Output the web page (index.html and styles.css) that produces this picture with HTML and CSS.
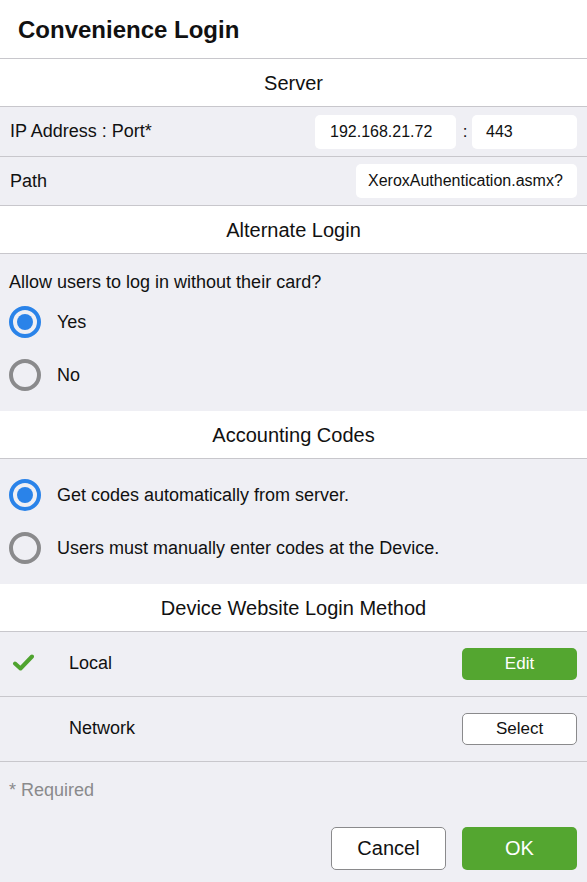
FILE: index.html
```html
<!DOCTYPE html>
<html>
<head>
<meta charset="utf-8">
<link rel="stylesheet" href="styles.css">
</head>
<body>
<div class="page">
  <header class="titlebar">Convenience Login</header>

  <div class="section-head">Server</div>
  <div class="row field-row">
    <span class="label">IP Address : Port*</span>
    <div class="inputs">
      <div class="input ip">192.168.21.72</div>
      <span class="colon">:</span>
      <div class="input port">443</div>
    </div>
  </div>
  <div class="row field-row">
    <span class="label">Path</span>
    <div class="input path">XeroxAuthentication.asmx?</div>
  </div>

  <div class="section-head">Alternate Login</div>
  <div class="group">
    <div class="question">Allow users to log in without their card?</div>
    <div class="radio-row"><span class="radio on"></span><span>Yes</span></div>
    <div class="radio-row"><span class="radio"></span><span>No</span></div>
  </div>

  <div class="section-head noline">Accounting Codes</div>
  <div class="group codes">
    <div class="radio-row"><span class="radio on"></span><span>Get codes automatically from server.</span></div>
    <div class="radio-row"><span class="radio"></span><span>Users must manually enter codes at the Device.</span></div>
  </div>

  <div class="section-head noline">Device Website Login Method</div>
  <div class="row method-row">
    <span class="check">
      <svg width="22" height="18" viewBox="0 0 22 18"><path d="M3 9.5 L8.5 14.5 L20 2.5" fill="none" stroke="#4fa32f" stroke-width="4" stroke-linecap="round" stroke-linejoin="round"/></svg>
    </span>
    <span class="method-label">Local</span>
    <button class="btn green small">Edit</button>
  </div>
  <div class="row method-row">
    <span class="check"></span>
    <span class="method-label">Network</span>
    <button class="btn outline small">Select</button>
  </div>

  <div class="required">* Required</div>

  <div class="footer">
    <button class="btn outline big">Cancel</button>
    <button class="btn green big">OK</button>
  </div>
</div>
</body>
</html>
```

FILE: styles.css
```css
* { box-sizing: border-box; }
html, body { margin: 0; padding: 0; }
body {
  font-family: "Liberation Sans", Arial, sans-serif;
  color: #111;
  background: #efeff4;
}
.page { width: 587px; height: 882px; background: #efeff4; display: flex; flex-direction: column; }
.titlebar {
  background: #fff;
  height: 59px;
  border-bottom: 1px solid #c8c7cc;
  font-weight: bold;
  font-size: 24px;
  padding-left: 18px;
  display: flex;
  align-items: center;
  padding-top: 1px;
}
.section-head {
  background: #fff;
  height: 48px;
  border-bottom: 1px solid #c8c7cc;
  display: flex;
  align-items: center;
  justify-content: center;
  font-size: 20px;
  padding-top: 1px;
}
.row {
  display: flex;
  align-items: center;
  border-bottom: 1px solid #c8c7cc;
}
.field-row {
  height: 50px;
  padding: 0 10px 0 10px;
  justify-content: space-between;
  font-size: 18px;
}
.field-row + .field-row { height: 49px; }
.inputs { display: flex; align-items: center; }
.input {
  background: #fff;
  border-radius: 5px;
  height: 34px;
  display: flex;
  align-items: center;
  font-size: 16px;
  padding-left: 14px;
}
.ip { width: 141px; padding-left: 15px; }
.port { width: 105px; padding-left: 14px; }
.colon { width: 16px; text-align: center; font-size: 17px; padding-left: 2px; }
.path { width: 221px; padding-left: 12px; }
.group { padding: 18px 9px 10px; font-size: 18px; height: 157px; }
.question { margin-bottom: 10px; }
.radio-row { display: flex; align-items: center; height: 54px; }
.radio {
  width: 32px; height: 32px;
  border-radius: 50%;
  border: 4px solid #8a8a8c;
  margin-right: 16px;
  position: relative;
  flex: none;
}
.radio.on { border-color: #2a83e9; }
.radio.on::after {
  content: "";
  position: absolute;
  left: 4px; top: 4px;
  width: 16px; height: 16px;
  border-radius: 50%;
  background: #2a83e9;
}
.question + .radio-row { margin-top: -8px; }
.group .radio-row + .radio-row { margin-top: -1px; }
.codes { padding-top: 8px; height: 125px; }
.codes .radio-row:first-child { margin-top: 1px; }
.method-row { height: 65px; padding: 0 10px 0 12px; font-size: 18px; }
.check { width: 57px; display: flex; align-items: center; padding-bottom: 3px; }
.method-label { flex: 1; padding-bottom: 2px; }
.btn {
  font-family: "Liberation Sans", Arial, sans-serif;
  border-radius: 5px;
  cursor: pointer;
  display: flex; align-items: center; justify-content: center;
}
.small { width: 115px; height: 32px; font-size: 17px; }
.big { width: 115px; height: 43px; font-size: 20px; }
.green { background: #54a630; color: #fff; border: none; }
.outline { background: #fff; color: #111; border: 1px solid #8a8a8c; }
.required { color: #8a8a8c; font-size: 18px; padding: 18px 9px 0; height: 65px; }
.footer { display: flex; justify-content: flex-end; gap: 16px; padding: 0 10px 0; }
```
